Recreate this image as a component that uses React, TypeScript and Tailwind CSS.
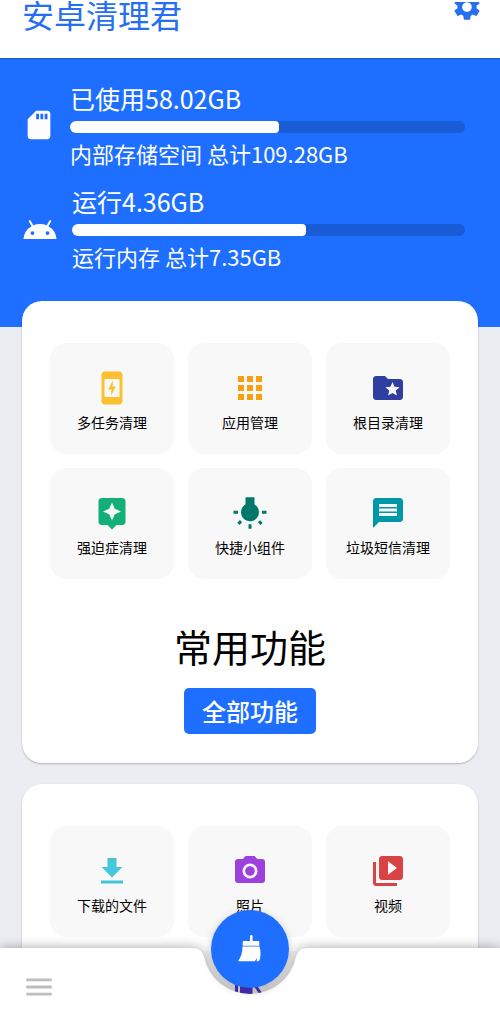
import {ReactNode} from "react";
import {
    MdAndroid,
    MdApps,
    MdAssistant,
    MdChargingStation,
    MdFolderSpecial,
    MdMenu,
    MdMessage,
    MdSdCard,
    MdSettings,
    MdVideoLibrary,
    MdWbIncandescent,
} from "react-icons/md";

type Tool = {
    label: string
    icon: ReactNode
}

const commonTools: Tool[] = [
    {label: "多任务清理", icon: <MdChargingStation className="size-9 text-[#fbc02d]"/>},
    {label: "应用管理", icon: <MdApps className="size-9 text-[#f9a010]"/>},
    {label: "根目录清理", icon: <MdFolderSpecial className="size-9 text-[#303f9f]"/>},
    {label: "强迫症清理", icon: <MdAssistant className="size-9 text-[#12b076]"/>},
    {label: "快捷小组件", icon: <MdWbIncandescent className="size-9 text-[#00796b]"/>},
    {label: "垃圾短信清理", icon: <MdMessage className="size-9 text-[#0097a7]"/>},
]

const fileTools: Tool[] = [
    {label: "下载的文件", icon: <DownloadIcon/>},
    {label: "照片", icon: <CameraIcon/>},
    {label: "视频", icon: <MdVideoLibrary className="size-9 text-[#d94343]"/>},
]

function DownloadIcon() {
    return (
        <svg viewBox="0 0 36 36" className="size-9" fill="#45c6da">
            <path d="M13.500 5h9v9h6L18 24.500 7.500 14h6z"/>
            <path d="M7 27.500h22v3H7z"/>
        </svg>
    )
}

function CameraIcon() {
    return (
        <svg viewBox="0 0 24 24" className="size-9" fill="#9c41dd">
            <path
                fillRule="evenodd"
                d="M9 2 7.2 4H4a2 2 0 0 0-2 2v12a2 2 0 0 0 2 2h16a2 2 0 0 0 2-2V6a2 2 0 0 0-2-2h-3.200L15 2H9zm3 15a5 5 0 1 0 0-10 5 5 0 0 0 0 10zm0-1.800a3.200 3.200 0 1 1 0-6.400 3.200 3.200 0 0 1 0 6.400z"
            />
        </svg>
    )
}

function BroomIcon() {
    return (
        <svg viewBox="0 0 24 28" className="w-6 h-7" fill="#ffffff">
            <path d="M12 1.300a1.300 1.300 0 0 1 2.600 0V6h5.400c.8 0 1.300.5 1.300 1.300v3.400H4.700V7.300C4.700 6.500 5.200 6 6 6h6z"/>
            <path d="M4.500 11.600h17c1.300 4.400 1.300 8.500.4 12.400-.5 1.600-1 2.300-2.300 2.300h-1l.4-3.300-2.200 3.300H0c3.200-4 4.500-8.700 4.500-14.700z"/>
        </svg>
    )
}

function UsageRow({icon, title, detail, percent}: { icon: ReactNode, title: string, detail: string, percent: number }) {
    return (
        <div className="flex items-center gap-x-3.5">
            {icon}
            <div className="flex-1">
                <p className="text-[25px] leading-[30px]">{title}</p>
                <div className="mt-2 h-3 rounded-full bg-[#1a5cd6] overflow-hidden">
                    <div className="h-full rounded-r-sm bg-white" style={{width: `${percent}%`}}/>
                </div>
                <p className="mt-1.5 text-[22px] leading-7">{detail}</p>
            </div>
        </div>
    )
}

function ToolGrid({tools, children}: { tools: Tool[], children?: ReactNode }) {
    return (
        <div className="grid grid-cols-3 gap-3.5">
            {
                tools.map((item) => (
                    <button
                        key={item.label}
                        type="button"
                        className="flex flex-col items-center pt-[27px] min-h-[111px] rounded-2xl bg-[#f8f8f8] cursor-pointer"
                    >
                        {item.icon}
                        <span className="mt-1.5 text-sm leading-5 text-black">{item.label}</span>
                    </button>
                ))
            }
            {children}
        </div>
    )
}

function BottomBar() {
    return (
        <nav className="fixed inset-x-0 bottom-0 h-[78px]">
            <div className="absolute inset-0 flex drop-shadow-[0_0_6px_rgba(0,0,0,0.35)]">
                <div className="flex-1 bg-white"/>
                <svg viewBox="0 0 120 78" className="-mx-px w-[122px] h-full shrink-0" preserveAspectRatio="none"
                     fill="#ffffff">
                    <path d="M0 0h3c7 0 10 3 11.900 9A46 46 0 0 0 105.100 9c1.900-6 4.900-9 11.900-9h3v78H0z"/>
                </svg>
                <div className="flex-1 bg-white"/>
            </div>

            <div className="relative flex items-center h-full px-[22px]">
                <button type="button" aria-label="菜单" className="cursor-pointer">
                    <MdMenu className="size-[34px] text-[#bdbdbd]"/>
                </button>
            </div>

            <button
                type="button"
                aria-label="清理"
                className="absolute left-1/2 -top-[38px] -translate-x-1/2 flex items-center justify-center size-[78px] rounded-full bg-[#1e6fff] shadow-[0_3px_8px_rgba(0,0,0,0.25)] cursor-pointer"
            >
                <BroomIcon/>
            </button>
        </nav>
    )
}

export default function App() {
    return (
        <div className="h-screen overflow-hidden bg-[#ecedf3] font-['Noto_Sans_CJK_SC',sans-serif]">
            <header className="relative h-[58px] pt-0.5 bg-white shadow-[0_1px_1px_rgba(0,0,0,0.2)]">
                <div className="flex items-start justify-between pl-[22px] pr-[17px] text-[#256ff0]">
                    <h1 className="text-[32px] leading-6">安卓清理君</h1>
                    <button type="button" aria-label="设置" className="h-[21px] flex items-end overflow-hidden cursor-pointer">
                        <MdSettings className="size-8 shrink-0"/>
                    </button>
                </div>
            </header>

            <section className="flex flex-col gap-y-[19px] pt-[25px] pb-[57px] pl-[22px] pr-[35px] bg-[#1e6fff] text-white">
                <UsageRow
                    icon={<MdSdCard className="size-[34px]"/>}
                    title="已使用58.02GB"
                    detail="内部存储空间 总计109.28GB"
                    percent={53}
                />
                <UsageRow
                    icon={<MdAndroid className="mt-1 size-9"/>}
                    title="运行4.36GB"
                    detail="运行内存 总计7.35GB"
                    percent={59.5}
                />
            </section>

            <main className="relative -mt-[26px] px-[22px] flex flex-col gap-y-[21px]">
                <section className="px-7 pt-[42px] pb-[29px] rounded-[20px] bg-white shadow-[0_1px_2px_rgba(0,0,0,0.25)]">
                    <ToolGrid tools={commonTools}/>
                    <div className="mt-[43px] flex flex-col items-center">
                        <h2 className="text-[38px] leading-[48px] text-black">常用功能</h2>
                        <button
                            type="button"
                            className="mt-[18px] px-[18px] h-[46px] rounded-[5px] bg-[#1e6fff] text-2xl font-medium text-white cursor-pointer"
                        >
                            全部功能
                        </button>
                    </div>
                </section>

                <section className="px-7 pt-[42px] pb-[29px] rounded-[20px] bg-white shadow-[0_1px_2px_rgba(0,0,0,0.25)]">
                    <ToolGrid tools={fileTools}>
                        <div className="col-start-2 flex justify-center pt-[27px] min-h-[111px] rounded-2xl bg-[#f8f8f8]">
                            <svg viewBox="0 0 36 36" className="size-9" fill="#5236d4">
                                <path d="M3 4h3v28H3zM8 4h12.500v28H8z"/>
                                <path d="M19 4h3.500l9 13H28z"/>
                            </svg>
                        </div>
                    </ToolGrid>
                </section>
            </main>

            <BottomBar/>
        </div>
    )
}
